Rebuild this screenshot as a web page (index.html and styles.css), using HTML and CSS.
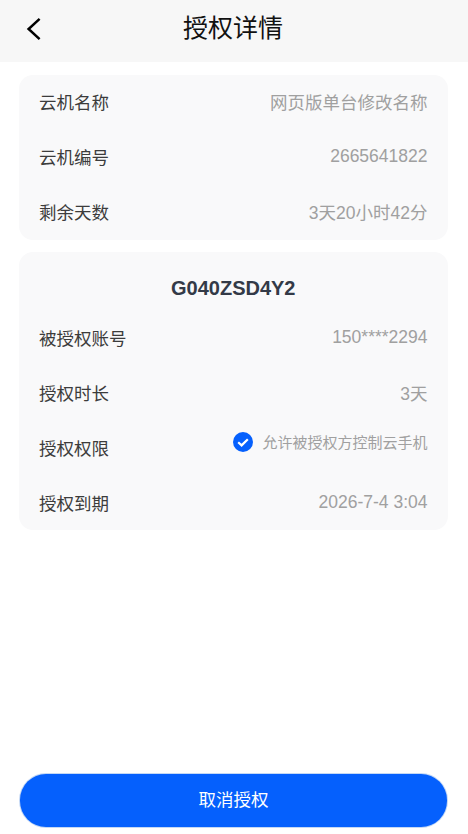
FILE: index.html
```html
<!DOCTYPE html>
<html lang="zh-CN">
<head>
    <meta charset="UTF-8">
    <meta name="viewport" content="width=device-width, initial-scale=1.0">
    <title>授权详情</title>
    <link rel="stylesheet" href="styles.css">
</head>
<body>

<div class="page">
    <div class="header">
        <svg class="back-icon" width="16" height="24" viewBox="0 0 16 24">
            <path d="M14.6 1.8 L3.6 12 L14.6 22.2" fill="none" stroke="#000" stroke-width="2.5"/>
        </svg>
        <div class="header-title">授权详情</div>
    </div>

    <div class="card card-info">
        <div class="row"><div class="label">云机名称</div><div class="value">网页版单台修改名称</div></div>
        <div class="row"><div class="label">云机编号</div><div class="value">2665641822</div></div>
        <div class="row"><div class="label">剩余天数</div><div class="value">3天20小时42分</div></div>
    </div>

    <div class="card">
        <div class="card-title">G040ZSD4Y2</div>
        <div class="row"><div class="label">被授权账号</div><div class="value">150****2294</div></div>
        <div class="row"><div class="label">授权时长</div><div class="value">3天</div></div>
        <div class="row">
            <div class="label">授权权限</div>
            <div class="permission">
                <svg class="check-icon" width="20" height="20" viewBox="0 0 20 20">
                    <circle cx="10" cy="10" r="10" fill="#0560fd"/>
                    <path d="M5.2 10.2 L8.6 13.4 L14.8 7.2" fill="none" stroke="#fff" stroke-width="2.2"/>
                </svg>
                <span class="permission-text">允许被授权方控制云手机</span>
            </div>
        </div>
        <div class="row"><div class="label">授权到期</div><div class="value">2026-7-4 3:04</div></div>
    </div>

    <div class="footer">
        <div class="cancel-button">取消授权</div>
    </div>
</div>

</body>
</html>
```

FILE: styles.css
```css
html, body {
    margin: 0;
    padding: 0;
    background: #fff;
}
body {
    font-family: "Liberation Sans", "Noto Sans CJK SC", sans-serif;
}
.page {
    height: 834px;
    display: flex;
    flex-direction: column;
    overflow: hidden;
}
.header {
    height: 62px;
    flex-shrink: 0;
    display: flex;
    align-items: center;
    justify-content: center;
    position: relative;
    background-color: #f7f7f7;
}
.back-icon {
    position: absolute;
    left: 25px;
    top: 17px;
}
.header-title {
    font-size: 25px;
    color: #111;
    padding-bottom: 10px;
    padding-right: 2px;
}
.card {
    margin: 13px 20px 0 19px;
    padding: 0 20.5px 0 20px;
    background-color: #f9f9fa;
    border-radius: 14px;
    display: flex;
    flex-direction: column;
}
.card + .card {
    margin-top: 12px;
}
.card-title {
    height: 58px;
    padding-top: 14px;
    box-sizing: border-box;
    display: flex;
    align-items: center;
    justify-content: center;
    font-size: 20px;
    font-weight: 700;
    color: #333a47;
}
.row {
    height: 55px;
    box-sizing: border-box;
    display: flex;
    align-items: center;
    justify-content: space-between;
}
.card-info .row {
    padding-bottom: 2px;
}
.label {
    font-size: 17.5px;
    color: #3c3c3c;
}
.value {
    font-size: 17.5px;
    color: #a0a0a0;
}
.permission {
    display: flex;
    align-items: center;
    gap: 9px;
    margin-bottom: 12px;
}
.permission-text {
    font-size: 15px;
    color: #a0a0a0;
}
.footer {
    margin-top: auto;
    padding: 0 21px 7px 20px;
}
.cancel-button {
    height: 53px;
    padding-bottom: 4px;
    box-sizing: border-box;
    border-radius: 26px;
    background-color: #0560fd;
    box-shadow: 0 0 0 1px #c4d8f5;
    color: #fff;
    font-size: 17.5px;
    display: flex;
    align-items: center;
    justify-content: center;
}
```
